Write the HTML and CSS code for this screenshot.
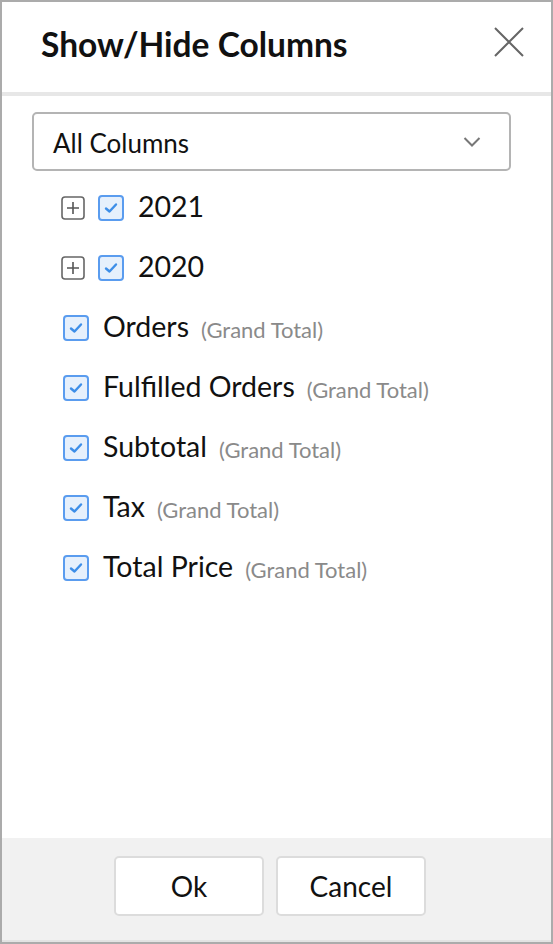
FILE: index.html
```html
<!DOCTYPE html>
<html>
<head>
<meta charset="utf-8">
<link rel="stylesheet" href="styles.css">
</head>
<body>
<div class="dialog">
  <div class="header">
    <h1 class="title">Show/Hide Columns</h1>
    <svg class="close" width="32" height="32" viewBox="0 0 32 32"><path d="M2 2 L30 30 M30 2 L2 30" stroke="#666" stroke-width="2" fill="none"/></svg>
  </div>
  <div class="divider"></div>
  <div class="body">
    <div class="select">
      <span>All Columns</span>
      <svg width="18" height="12" viewBox="0 0 18 12"><path d="M1.5 2 L9 9.5 L16.5 2" stroke="#777" stroke-width="2" fill="none"/></svg>
    </div>
    <ul class="tree">
      <li class="row group">
        <span class="expand"><svg width="24" height="24" viewBox="0 0 24 24"><rect x="1" y="1" width="22" height="22" rx="3" fill="#fff" stroke="#666" stroke-width="1.6"/><path d="M12 6v12M6 12h12" stroke="#555" stroke-width="1.6"/></svg></span>
        <span class="check"><svg width="14" height="12" viewBox="0 0 14 12"><path d="M2 6.5 L5.5 9.5 L12 2.5" stroke="#3d8ee8" stroke-width="2.4" fill="none" stroke-linecap="round" stroke-linejoin="round"/></svg></span>
        <span class="label">2021</span>
      </li>
      <li class="row group">
        <span class="expand"><svg width="24" height="24" viewBox="0 0 24 24"><rect x="1" y="1" width="22" height="22" rx="3" fill="#fff" stroke="#666" stroke-width="1.6"/><path d="M12 6v12M6 12h12" stroke="#555" stroke-width="1.6"/></svg></span>
        <span class="check"><svg width="14" height="12" viewBox="0 0 14 12"><path d="M2 6.5 L5.5 9.5 L12 2.5" stroke="#3d8ee8" stroke-width="2.4" fill="none" stroke-linecap="round" stroke-linejoin="round"/></svg></span>
        <span class="label">2020</span>
      </li>
      <li class="row">
        <span class="check"><svg width="14" height="12" viewBox="0 0 14 12"><path d="M2 6.5 L5.5 9.5 L12 2.5" stroke="#3d8ee8" stroke-width="2.4" fill="none" stroke-linecap="round" stroke-linejoin="round"/></svg></span>
        <span class="label">Orders</span><span class="sub">(Grand Total)</span>
      </li>
      <li class="row">
        <span class="check"><svg width="14" height="12" viewBox="0 0 14 12"><path d="M2 6.5 L5.5 9.5 L12 2.5" stroke="#3d8ee8" stroke-width="2.4" fill="none" stroke-linecap="round" stroke-linejoin="round"/></svg></span>
        <span class="label">Fulfilled Orders</span><span class="sub">(Grand Total)</span>
      </li>
      <li class="row">
        <span class="check"><svg width="14" height="12" viewBox="0 0 14 12"><path d="M2 6.5 L5.5 9.5 L12 2.5" stroke="#3d8ee8" stroke-width="2.4" fill="none" stroke-linecap="round" stroke-linejoin="round"/></svg></span>
        <span class="label">Subtotal</span><span class="sub">(Grand Total)</span>
      </li>
      <li class="row">
        <span class="check"><svg width="14" height="12" viewBox="0 0 14 12"><path d="M2 6.5 L5.5 9.5 L12 2.5" stroke="#3d8ee8" stroke-width="2.4" fill="none" stroke-linecap="round" stroke-linejoin="round"/></svg></span>
        <span class="label">Tax</span><span class="sub">(Grand Total)</span>
      </li>
      <li class="row">
        <span class="check"><svg width="14" height="12" viewBox="0 0 14 12"><path d="M2 6.5 L5.5 9.5 L12 2.5" stroke="#3d8ee8" stroke-width="2.4" fill="none" stroke-linecap="round" stroke-linejoin="round"/></svg></span>
        <span class="label">Total Price</span><span class="sub">(Grand Total)</span>
      </li>
    </ul>
  </div>
  <div class="footer">
    <button class="btn">Ok</button>
    <button class="btn">Cancel</button>
  </div>
</div>
</body>
</html>
```

FILE: styles.css
```css
* { box-sizing: border-box; }
html, body { margin: 0; padding: 0; background: #fff; }
body { font-family: Lato, "Noto Sans", sans-serif; color: #111; }
.dialog {
  width: 553px;
  height: 944px;
  border: 2px solid #ababab;
  display: flex;
  flex-direction: column;
  background: #fff;
}
.header {
  height: 90px;
  display: flex;
  align-items: center;
  justify-content: space-between;
  padding: 0 26px 0 38px;
}
.title {
  margin: 0 0 0 1px;
  font-size: 33.5px;
  font-weight: 700;
  color: #111;
  margin-top: -6px;
}
.close { margin-top: -10px; }
.divider { height: 4px; background: #e7e7e7; }
.body { flex: 1; padding: 16px 40px 0 30px; }
.select {
  height: 59px;
  border: 2px solid #b4b4b4;
  border-radius: 5px;
  display: flex;
  align-items: center;
  justify-content: space-between;
  padding: 0 28px 0 19px;
  font-size: 26px;
  color: #111;
}
.select span { padding-top: 2px; }
.tree { list-style: none; margin: 7px 0 0 0; padding: 0; }
.row {
  height: 60px;
  display: flex;
  align-items: center;
  padding-left: 31px;
}
.row.group { padding-left: 29px; }
.expand { display: flex; width: 24px; height: 24px; margin-right: 13px; }
.check {
  width: 26px;
  height: 26px;
  border: 2px solid #5a9cef;
  border-radius: 4px;
  background: #e6f0fc;
  display: flex;
  align-items: center;
  justify-content: center;
  margin-right: 14px;
  flex-shrink: 0;
}
.label { font-size: 28.5px; color: #111; margin-top: -4px; }
.sub { font-size: 22px; color: #8a8a8a; margin-left: 12px; padding-top: 2px; }
.footer {
  height: 104px;
  background: #f1f1f1;
  border-bottom: 2px solid #e3e3e3;
  display: flex;
  justify-content: center;
  align-items: flex-start;
  padding: 18px 13px 0 0;
  gap: 12px;
}
.btn {
  width: 150px;
  height: 60px;
  background: #fff;
  border: 2px solid #dcdcdc;
  border-radius: 5px;
  font-family: Lato, "Noto Sans", sans-serif;
  font-size: 28px;
  color: #111;
  padding: 0;
}
```
